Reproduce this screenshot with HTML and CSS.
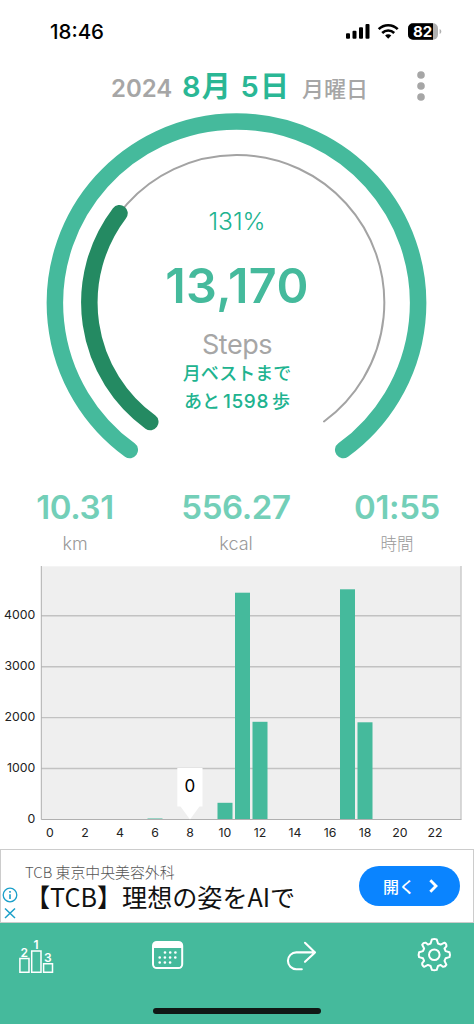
FILE: index.html
```html
<!DOCTYPE html>
<html lang="ja">
<head>
<meta charset="utf-8">
<title>Steps</title>
<link rel="stylesheet" href="styles.css">
</head>
<body>
<div class="app">
  <div class="status">
    <span class="clock">18:46</span>
    <svg class="status-icons" width="98" height="20" viewBox="0 0 98 20">
      <g fill="#000">
        <rect x="0" y="11.3" width="4" height="5.400" rx="1"/>
        <rect x="6.500" y="8.700" width="4" height="8" rx="1"/>
        <rect x="13" y="5.300" width="4" height="11.400" rx="1"/>
        <rect x="19.500" y="2" width="4" height="14.700" rx="1"/>
      </g>
      <g fill="none" stroke="#000" stroke-width="2.600">
        <path d="M32.700 7.200a13.500 13.500 0 0 1 19 0"/>
        <path d="M36.200 11a8.600 8.600 0 0 1 12 0"/>
      </g>
      <path d="M39.100 13.600a4.400 4.400 0 0 1 6.200 0L42.200 16.800z" fill="#000"/>
      <rect x="62" y="1.300" width="30" height="16.400" rx="5" fill="#b0b0b0"/>
      <path d="M67 1.300h20v16.400H67a5 5 0 0 1-5-5V6.300a5 5 0 0 1 5-5z" fill="#000"/>
      <path d="M93.600 7c2.300.8 2.300 4.200 0 5z" fill="#b0b0b0"/>
      <text class="battery" x="76.700" y="14.900">82</text>
    </svg>
  </div>
  <header class="date">
    <span class="year">2024</span>
    <span class="day">8月 5日</span>
    <span class="weekday">月曜日</span>
    <svg class="more" width="10" height="32" viewBox="0 0 10 32" fill="#a6a6a6">
      <circle cx="5" cy="5" r="3.800"/><circle cx="5" cy="16" r="3.800"/><circle cx="5" cy="27" r="3.800"/>
    </svg>
  </header>
  <section class="gauge">
    <svg class="ring" width="474" height="370" viewBox="0 105 474 370" fill="none" stroke-linecap="round">
      <path d="M129.800 450A181.600 181.600 0 1 1 343.200 450" stroke="#45ba9c" stroke-width="16.500"/>
      <path d="M150.300 422A147.500 147.500 0 1 1 324 421.500" stroke="#a3a3a3" stroke-width="2"/>
      <path d="M150.300 422A147.500 147.500 0 0 1 119.500 213.200" stroke="#248a62" stroke-width="16.500"/>
    </svg>
    <div class="percent">131%</div>
    <div class="count">13,170</div>
    <div class="unit">Steps</div>
    <div class="best">月ベストまで</div>
    <div class="best second">あと<span class="remain">1598</span>歩</div>
  </section>
  <section class="stats">
    <div class="stat"><b>10.31</b><span>km</span></div>
    <div class="stat"><b>556.27</b><span>kcal</span></div>
    <div class="stat"><b>01:55</b><span class="hours">時間</span></div>
  </section>
  <svg class="chart" width="474" height="284" viewBox="0 565 474 284">
    <rect x="41" y="566.300" width="420" height="253" fill="#efefef"/>
    <path d="M41 615.800H461M41 666.700H461M41 717.600H461M41 768.500H461" stroke="#c2c2c2" stroke-width="1.400"/>
    <path d="M461 566V819.500" stroke="#c9c9c9" stroke-width="1.400"/>
    <g fill="#45ba9c">
      <rect x="147.500" y="818.500" width="15" height="1"/>
      <rect x="217.500" y="802.800" width="15" height="16.500"/>
      <rect x="235" y="592.700" width="15" height="226.600"/>
      <rect x="252.500" y="721.800" width="15" height="97.500"/>
      <rect x="340" y="589.300" width="15" height="230"/>
      <rect x="357.500" y="722.300" width="15" height="97"/>
    </g>
    <path d="M41.300 566V819.500H461.500" fill="none" stroke="#b0b0b0" stroke-width="1"/>
    <path d="M177.300 768H202.500V806.500H199.500L190 819.500L180.500 806.500H177.300z" fill="#fff"/>
    <text class="marker" x="189.800" y="792">0</text>
    <g class="y-axis">
      <text x="35.300" y="619.300">4000</text><text x="35.300" y="670.300">3000</text><text x="35.300" y="721.300">2000</text><text x="35.300" y="772.300">1000</text><text x="35.300" y="823.300">0</text>
    </g>
    <g class="x-axis">
      <text x="50" y="836.500">0</text><text x="85" y="836.500">2</text><text x="120" y="836.500">4</text><text x="155" y="836.500">6</text><text x="190" y="836.500">8</text><text x="225" y="836.500">10</text><text x="260" y="836.500">12</text><text x="295" y="836.500">14</text><text x="330" y="836.500">16</text><text x="365" y="836.500">18</text><text x="400" y="836.500">20</text><text x="435" y="836.500">22</text>
    </g>
  </svg>
  <section class="ad">
    <svg class="ad-marks" width="16" height="36" viewBox="0 0 16 36" fill="none" stroke="#1a9fc9" stroke-width="1.300">
      <circle cx="8" cy="8" r="6.800"/><path d="M8 4V5.800M8 7.200V12" stroke-width="1.600"/>
      <path d="M3 21.500L13 31M13 21.500L3 31" stroke-width="1.500"/>
    </svg>
    <div class="ad-copy">
      <div class="ad-brand">TCB 東京中央美容外科</div>
      <div class="ad-title">【TCB】理想の姿をAIで</div>
    </div>
    <div class="open"><span>開く</span>
      <svg width="9" height="14" viewBox="0 0 9 14" fill="none" stroke="#fff" stroke-width="2.800"><path d="M1.300 1.300L7 7L1.300 12.700"/></svg>
    </div>
  </section>
  <nav class="tabs">
    <svg class="tab podium" width="38" height="40" viewBox="18 936 38 40" fill="none" stroke="#fff" stroke-width="1.500">
      <path d="M19.900 958.500H29V972.300H19.900zM31.700 951H41V972.300H31.700zM43.600 963.700H52.500V972.300H43.600z"/>
      <g class="rank"><text x="24.300" y="956.600">2</text><text x="36" y="948.800">1</text><text x="47.800" y="961.600">3</text></g>
    </svg>
    <svg class="tab calendar" width="34" height="40" viewBox="151 936 34 40">
      <rect x="153" y="941.900" width="29.200" height="26.200" rx="3.800" fill="none" stroke="#fff" stroke-width="2"/>
      <path d="M153 948V945a3 3 0 0 1 3-3H179a3 3 0 0 1 3 3V948z" fill="#fff"/>
      <path d="M165 952.500H179M159.700 957.500H179M159.700 962.500H173" fill="none" stroke="#fff" stroke-width="2.700" stroke-linecap="round" stroke-dasharray="0 5.200"/>
    </svg>
    <svg class="tab share" width="34" height="40" viewBox="284 936 34 40" fill="none" stroke="#fff" stroke-width="2.100" stroke-linecap="round" stroke-linejoin="round">
      <path d="M305 942.800L315 952.400L305 961.800M315 952.400H296.300A8.400 8.400 0 0 0 296.300 969.200H301.800"/>
    </svg>
    <svg class="tab settings" width="36" height="40" viewBox="416 936 36 40" fill="none" stroke="#fff" stroke-width="2" stroke-linejoin="round">
      <circle cx="434.300" cy="954.700" r="5.300"/>
      <path d="M431.900 939.400Q434.300 938.700 436.700 939.400L438 943.500L440.700 944.600L444.500 942.700Q446.700 943.900 446.400 946.400L444.500 948.500L445.600 951.100L449.500 952.300Q450.400 954.700 449.500 957.100L445.600 958.300L444.500 960.900L446.400 964.700Q445.200 966.900 442.900 966.700L440.700 964.900L438 966L436.700 969.900Q434.300 970.700 431.900 969.900L430.600 966L427.900 964.900L424.100 966.800Q421.900 965.600 422.200 963.200L424.100 960.900L423 958.300L419.100 957.100Q418.200 954.700 419.100 952.300L423 951.100L424.100 948.500L422.200 944.700Q423.400 942.500 425.800 942.800L427.900 944.600L430.600 943.500z"/>
    </svg>
    <i class="home"></i>
  </nav>
</div>
</body>
</html>
```
FILE: styles.css
```css
* { box-sizing: border-box; }
body { margin: 0; background: #fff; font-family: Inter, "Noto Sans CJK JP", sans-serif; }
.app { width: 474px; height: 1024px; display: flex; flex-direction: column; overflow: hidden; }
.status { height: 60px; display: flex; justify-content: space-between; padding: 22px 30px 0 50px; }
.clock { font-size: 20.5px; line-height: 20px; font-weight: 500; }
.status-icons { display: block; }
.battery { font: 700 15px Inter, sans-serif; fill: #fff; text-anchor: middle; }
.date { height: 45px; display: flex; align-items: baseline; padding: 7px 0 0 111px; white-space: nowrap; line-height: 40px; position: relative; }
.year { width: 71px; font-size: 24px; font-weight: 600; color: #a6a6a6; }
.day { width: 120px; font-size: 29px; letter-spacing: 1.2px; font-weight: 600; color: #2ab795; }
.weekday { font-size: 22px; font-weight: 500; color: #a6a6a6; }
.more { position: absolute; left: 416px; top: 10px; }
.gauge { height: 370px; position: relative; text-align: center; padding-top: 98px; color: #20b38f; }
.ring { position: absolute; left: 0; top: 0; }
.percent { height: 37px; line-height: 36px; font-size: 24.5px; font-weight: 300; }
.count { height: 92px; line-height: 92px; font-size: 48.5px; letter-spacing: .4px; font-weight: 600; color: #45ba9c; }
.unit { height: 28px; line-height: 25px; font-size: 27px; letter-spacing: -.5px; color: #a6a6a6; }
.best { height: 28px; line-height: 28px; font-size: 18px; font-weight: 500; }
.second { line-height: 28px; }
.remain { padding: 0 3px; font-size: 19px; letter-spacing: .6px; }
.stats { height: 90px; display: flex; padding: 12px 0 0 0; }
.stat { display: flex; flex-direction: column; align-items: center; width: 172px; }
.stat:first-child { width: 150px; }
.stat:last-child { width: 150px; }
.stat b { line-height: 40px; font-size: 33px; letter-spacing: -.4px; font-weight: 600; color: #73cfb8; }
.stat span { line-height: 34px; font-size: 18px; font-weight: 300; color: #999; }
.stat .hours { font-size: 16.5px; line-height: 34px; }
.chart { display: block; flex: none; }
.chart text { font-family: Inter, sans-serif; font-size: 12.3px; fill: #222; }
.y-axis { text-anchor: end; }
.x-axis { text-anchor: middle; }
.chart .marker { font-size: 17px; text-anchor: middle; fill: #000; }
.ad { height: 74px; display: flex; border: 1px solid #ccc; border-top-width: 1.5px; position: relative; font-family: "Noto Sans CJK JP", sans-serif; }
.ad-marks { margin: 37px 0 0 1px; flex: none; }
.ad-copy { padding: 10px 0 0 7px; width: 341px; flex: none; white-space: nowrap; }
.ad-brand { font-size: 14.9px; line-height: 23px; font-weight: 300; color: #555; }
.ad-title { font-size: 25.1px; line-height: 27px; color: #111; }
.open { width: 101px; height: 40px; flex: none; margin: 16px 0 0 0; border-radius: 20px; background: #0a84ff; color: #fff; display: flex; align-items: center; padding-left: 24px; font-size: 16px; font-weight: 500; gap: 14px; }
.tabs { height: 101px; flex: none; background: #45ba9c; display: flex; align-items: flex-start; padding: 13px 0 0 18px; position: relative; }
.tab { display: block; }
.calendar { margin-left: 95px; }
.share { margin-left: 99px; }
.settings { margin-left: 98px; }
.rank { font: 600 12px Inter, sans-serif; fill: #fff; stroke: none; text-anchor: middle; }
.home { position: absolute; left: 153px; top: 85px; width: 168px; height: 6px; border-radius: 3px; background: #101815; }
```
